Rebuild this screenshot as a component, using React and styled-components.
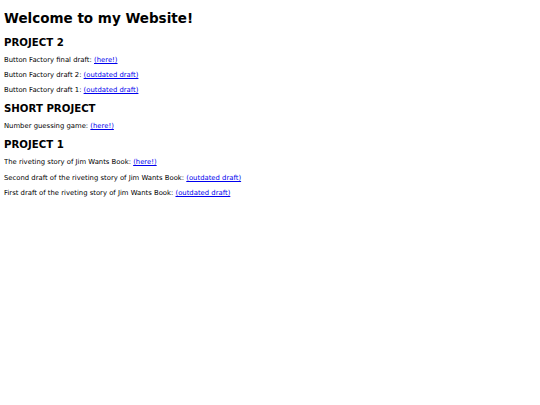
import styled, { createGlobalStyle } from 'styled-components';

const GlobalStyle = createGlobalStyle`
  body {
    margin: 4px;
    background: #ffffff;
    color: #000000;
    font-family: "DejaVu Sans", Verdana, sans-serif;
  }
`;

const Title = styled.h1`
  font-size: 13.5px;
  margin: 6px 0 10.5px;
`;

const Heading = styled.h2`
  font-size: 10.2px;
  margin: 8.5px 0;
`;

const Line = styled.p`
  font-size: 6.85px;
  margin: 7.2px 0;
`;

const Link = styled.a`
  color: #0000ee;
  text-decoration: underline;
`;

const sections = [
  {
    title: 'PROJECT 2',
    items: [
      ['Button Factory final draft: ', '(here!)'],
      ['Button Factory draft 2: ', '(outdated draft)'],
      ['Button Factory draft 1: ', '(outdated draft)'],
    ],
  },
  {
    title: 'SHORT PROJECT',
    items: [['Number guessing game: ', '(here!)']],
  },
  {
    title: 'PROJECT 1',
    items: [
      ['The riveting story of Jim Wants Book: ', '(here!)'],
      ['Second draft of the riveting story of Jim Wants Book: ', '(outdated draft)'],
      ['First draft of the riveting story of Jim Wants Book: ', '(outdated draft)'],
    ],
  },
];

const App = () => {
  return (
    <>
      <GlobalStyle />
      <Title>Welcome to my Website!</Title>
      {sections.map((s) => (
        <section key={s.title}>
          <Heading>{s.title}</Heading>
          {s.items.map(([label, link]) => (
            <Line key={label}>
              {label}
              <Link href="#">{link}</Link>
            </Line>
          ))}
        </section>
      ))}
    </>
  );
};

export default App;
